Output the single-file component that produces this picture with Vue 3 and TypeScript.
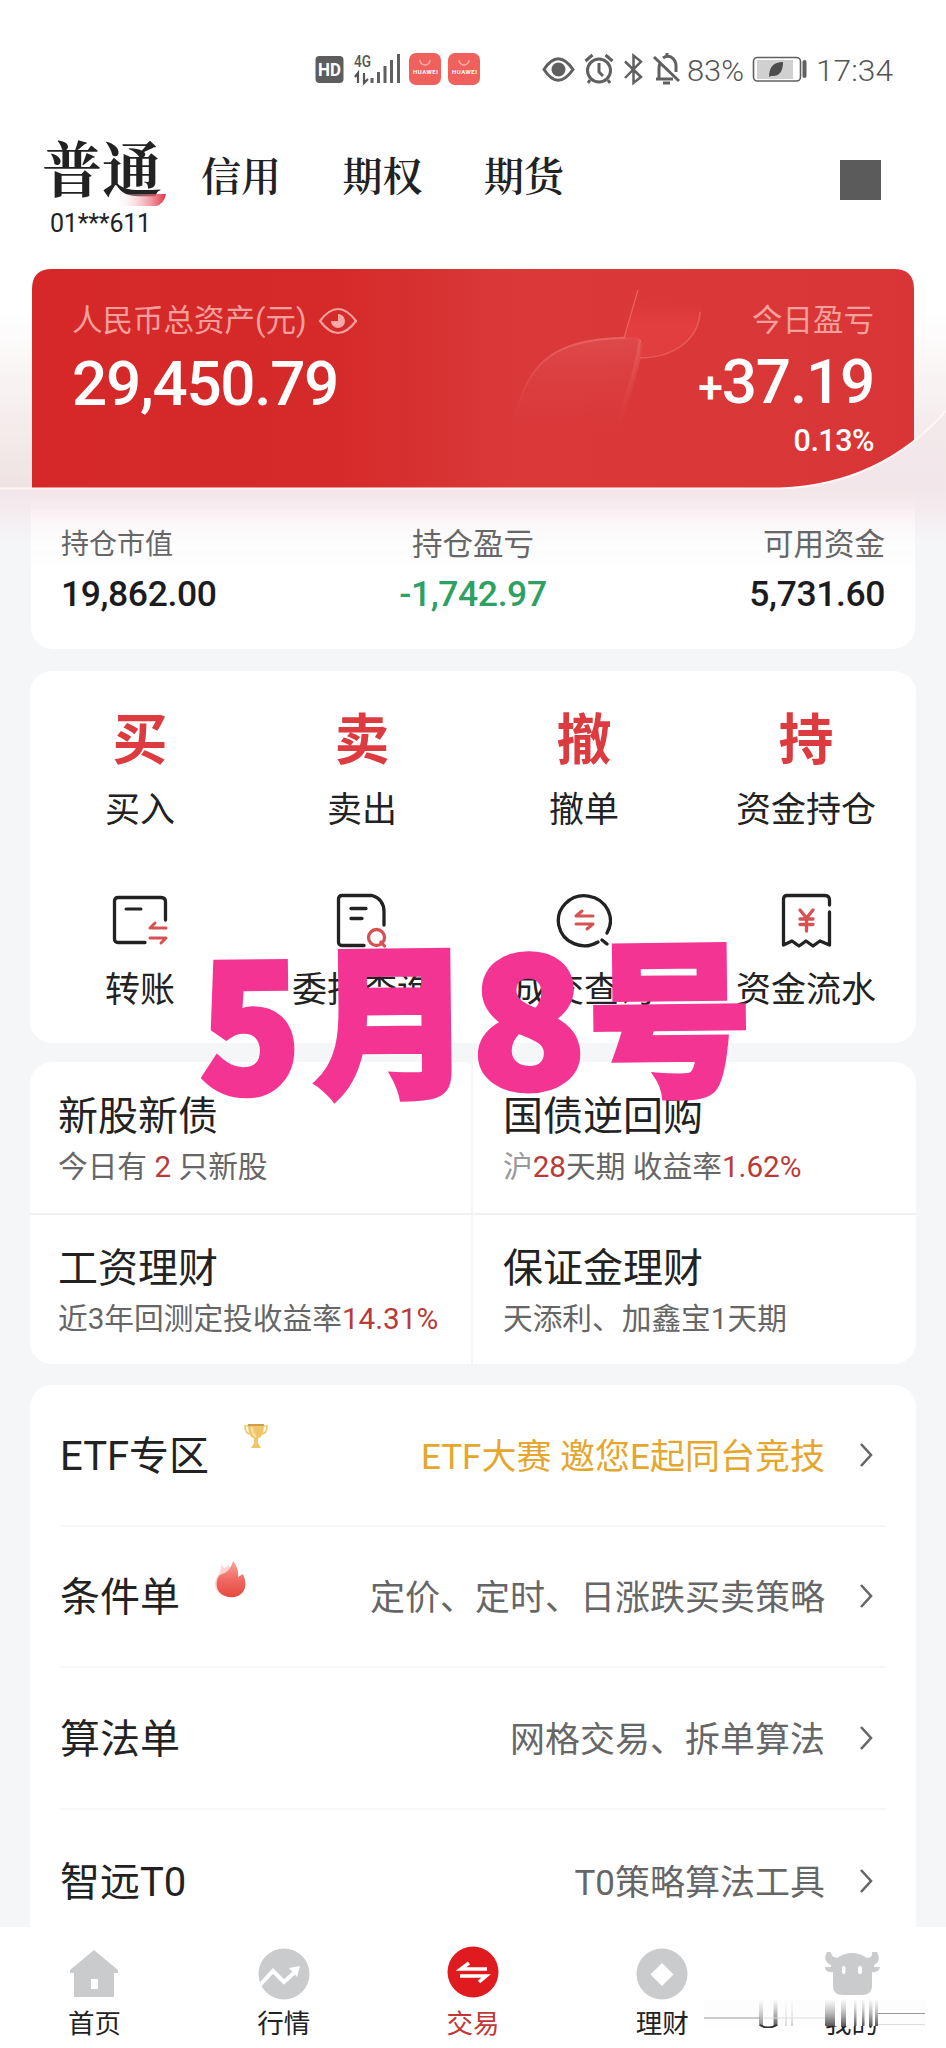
<script setup lang="ts">
interface Row { title: string; note: string; gold?: boolean; badge?: 'cup' | 'fire' }

const tabs: string[] = ['信用', '期权', '期货']
const quick = [
  { glyph: '买', label: '买入' },
  { glyph: '卖', label: '卖出' },
  { glyph: '撤', label: '撤单' },
  { glyph: '持', label: '资金持仓' },
]
const tools = [
  { icon: 'transfer', label: '转账' },
  { icon: 'orders', label: '委托查询' },
  { icon: 'deals', label: '成交查询' },
  { icon: 'flow', label: '资金流水' },
]
const rows: Row[] = [
  { title: 'ETF专区', note: 'ETF大赛 邀您E起同台竞技', gold: true, badge: 'cup' },
  { title: '条件单', note: '定价、定时、日涨跌买卖策略', badge: 'fire' },
  { title: '算法单', note: '网格交易、拆单算法' },
  { title: '智远T0', note: 'T0策略算法工具' },
]
const nav = [
  { icon: 'home', label: '首页' },
  { icon: 'market', label: '行情' },
  { icon: 'trade', label: '交易' },
  { icon: 'wealth', label: '理财' },
  { icon: 'mine', label: '我的' },
]
</script>

<template>
  <div class="screen">
    <header class="status">
      <svg class="status-left" viewBox="315 50 170 38">
        <rect x="315.500" y="56" width="28" height="27" rx="4" fill="#5d5d5d" />
        <text x="318" y="76" font-size="18" font-weight="700" fill="#fff" textLength="23" lengthAdjust="spacingAndGlyphs">HD</text>
        <text x="354" y="67" font-size="16" font-weight="500" fill="#555" textLength="17" lengthAdjust="spacingAndGlyphs">4G</text>
        <path d="M355 77l3-4v10M364 73v10l4-4" fill="none" stroke="#555" stroke-width="2.200" />
        <path d="M372 83v-5M378.500 83V72M385 83V66M391.500 83V60M398.500 83V54" stroke="#606060" stroke-width="3" />
        <g v-for="x in [409, 448]" :key="x">
          <rect :x="x" y="53" width="32" height="32" rx="7" fill="#f0605d" />
          <path :d="`M${x + 11} 60a5 5 0 0 0 10 0`" fill="none" stroke="#ffb5a4" stroke-width="1.500" />
          <text :x="x + 4" y="74" font-size="6" font-weight="700" fill="#fff" textLength="25">HUAWEI</text>
        </g>
      </svg>
      <svg class="status-right" viewBox="540 50 356 38">
        <g fill="none" stroke="#606060" stroke-width="3">
          <path d="M544 69.500Q558 48 573 69.500Q558 91 544 69.500Z" />
          <circle cx="558.500" cy="69.500" r="5.500" fill="#606060" />
          <circle cx="599" cy="70.500" r="11.500" />
          <path d="M599 63v9l4 4M585.500 61l7-6M605.500 55l7 6M590 80l-2 3M608 80l2 3" />
          <path d="M625 61.500L641 77l-7.500 6V55.500l7.500 6L625 78" stroke-width="2.500" />
          <path d="M654 57l25 24M659 78V68q0-4 2-6M656 79h17M663 58q4-3 8-1 5 3 5 9v6M667 53v3M663 83h7" />
        </g>
        <text x="687" y="81" font-size="30" font-weight="300" fill="#555" textLength="57" lengthAdjust="spacingAndGlyphs">83%</text>
        <rect x="753.500" y="57.500" width="47" height="23.500" rx="4" fill="#fff" stroke="#606060" stroke-width="1.600" />
        <rect x="757" y="60" width="36" height="19" fill="#d0d0d0" />
        <path d="M769 77Q769 62 783 62Q783 77 771 76Z" fill="#4d4d4d" />
        <path d="M804.500 62v14" stroke="#606060" stroke-width="4" stroke-linecap="round" />
        <text x="816" y="81" font-size="30" font-weight="300" fill="#555" textLength="77" lengthAdjust="spacingAndGlyphs">17:34</text>
      </svg>
    </header>

    <nav class="tabs">
      <div class="tab-active">
        <strong>普通</strong>
        <svg class="swash" viewBox="0 0 52 12"><defs><linearGradient id="sw"><stop offset="0" stop-color="#fff" stop-opacity="0" /><stop offset="1" stop-color="#e03445" /></linearGradient></defs><path d="M0 0H52Q50 10 42 12H0Z" fill="url(#sw)" /></svg>
        <span>01***611</span>
      </div>
      <div class="tab-list"><span v-for="t in tabs" :key="t">{{ t }}</span></div>
      <i class="square"></i>
    </nav>

    <section class="hero">
      <svg class="hero-bg" viewBox="0 249 946 301">
        <defs>
          <linearGradient id="side" x1="0" y1="0" x2="0" y2="1"><stop offset="0" stop-color="#fff" /><stop offset=".25" stop-color="#fff" /><stop offset="1" stop-color="#efe2e2" /></linearGradient>
          <linearGradient id="under" x1="0" y1="410" x2="0" y2="550" gradientUnits="userSpaceOnUse"><stop offset="0" stop-color="#f3e8ea" /><stop offset=".55" stop-color="#f2e6ea" /><stop offset="1" stop-color="#f6f7f9" /></linearGradient>
          <linearGradient id="red"><stop offset="0" stop-color="#d62828" /><stop offset=".35" stop-color="#d52a2a" /><stop offset=".55" stop-color="#da393a" /><stop offset="1" stop-color="#d93536" /></linearGradient>
          <linearGradient id="leafA" x1="0" y1="0" x2="0" y2="1"><stop offset="0" stop-color="#e05353" /><stop offset="1" stop-color="#d93637" stop-opacity="0" /></linearGradient>
          <linearGradient id="leafB" x1="0" y1="0" x2="0" y2="1"><stop offset="0" stop-color="#d93637" stop-opacity="0" /><stop offset=".5" stop-color="#e64042" /><stop offset="1" stop-color="#e23f41" /></linearGradient>
          <linearGradient id="lineA" x1="0" y1="0" x2="0" y2="1"><stop offset="0" stop-color="#ea6462" /><stop offset="1" stop-color="#d93637" stop-opacity="0" /></linearGradient>
          <linearGradient id="panel" x1="0" y1="488" x2="0" y2="550" gradientUnits="userSpaceOnUse"><stop offset="0" stop-color="#f3e4e8" /><stop offset=".55" stop-color="#faf4f6" /><stop offset="1" stop-color="#fafbfd" /></linearGradient>
        </defs>
        <rect y="249" width="946" height="240" fill="url(#side)" />
        <path d="M32 488V289Q32 269 52 269H894Q914 269 914 289V488Z" fill="url(#red)" />
        <path d="M511 438C522 365 550 340 620 338Q640 336 641 342C637 370 625 405 611 446Z" fill="url(#leafA)" opacity=".65" />
        <path d="M511 438C522 365 550 340 620 338Q640 336 641 342" fill="none" stroke="url(#lineA)" stroke-width="2" />
        <path d="M641 342C637 370 625 405 611 446" fill="none" stroke="url(#lineA)" stroke-width="5" opacity=".7" />
        <path d="M638 290L624 338L641 340L640 358C680 357 705 335 703 290Z" fill="url(#leafB)" opacity=".8" />
        <path d="M638 290L624 338" stroke="#eb6260" stroke-width="1.200" />
        <path d="M640 358C680 357 699 335 700 312" fill="none" stroke="#e85b58" stroke-width="1.600" />
        <path d="M0 488.500H780Q880 485 946 411V550H0Z" fill="url(#under)" />
        <path d="M31 490H915V550H31Z" fill="url(#panel)" />
        <path d="M0 488.500H780Q880 485 946 411" fill="none" stroke="#fff5f5" stroke-width="2" />
      </svg>
      <div class="hero-text">
        <div class="total">
          <div class="cap">人民币总资产(元)
            <svg viewBox="0 0 40 28"><path d="M2 14Q20-10 38 14Q20 38 2 14Z" fill="none" stroke="#f5a09c" stroke-width="2.200" /><path d="M20 14V7A7 7 0 1 1 13 14Z" fill="#f7aaa5" /></svg>
          </div>
          <b>29,450.79</b>
        </div>
        <div class="today">
          <div class="cap">今日盈亏</div>
          <b><small>+</small>37.19</b>
          <em>0.13%</em>
        </div>
      </div>
    </section>

    <section class="holdings">
      <div><span class="narrow">持仓市值</span><b>19,862.00</b></div>
      <div class="mid"><span>持仓盈亏</span><b class="green">-1,742.97</b></div>
      <div class="end"><span>可用资金</span><b>5,731.60</b></div>
    </section>

    <section class="card grid4">
      <div v-for="q in quick" :key="q.glyph" class="cell"><b>{{ q.glyph }}</b><span>{{ q.label }}</span></div>
      <div v-for="t in tools" :key="t.icon" class="cell tool">
        <svg viewBox="0 0 56 56" fill="none" stroke="#222" stroke-width="3.300" stroke-linecap="round" stroke-linejoin="round">
          <template v-if="t.icon === 'transfer'">
            <path d="M33 50.500H6Q2.500 50.500 2.500 47V9Q2.500 5.500 6 5.500H49Q53.500 5.500 53.500 10V28" /><path d="M14 17H29" stroke-width="3" />
            <path d="M54 36H38L43 31M38 46H54L49 51" stroke="#d65252" stroke-width="3" />
          </template>
          <template v-else-if="t.icon === 'orders'">
            <path d="M30 53.500H8Q4.500 53.500 4.500 50V7Q4.500 3.500 8 3.500H38Q50 7 50 20V33" /><path d="M17 16.500H32M17 26.500H28" />
            <circle cx="42.500" cy="45.500" r="8" stroke="#d65252" /><path d="M47 50l3.500 4" stroke="#d65252" />
          </template>
          <template v-else-if="t.icon === 'deals'">
            <path d="M51 41A26 25 0 1 0 42 50M46 48L51 52" /><path d="M37 24H20L26 19M20 32H37L31 37" stroke="#d65252" stroke-width="3" />
          </template>
          <template v-else>
            <path d="M51.500 13V8Q51.500 3.500 47 3.500H9Q5.500 3.500 5.500 7V53L14 49L21 54L28 49L35 54L42 49L51.500 53V20" />
            <path d="M22 18L28.500 26L35 18M28.500 26V39M22 27H35M22 32.500H35" stroke="#d65252" />
          </template>
        </svg>
        <span>{{ t.label }}</span>
      </div>
    </section>

    <section class="card promo">
      <div><h3>新股新债</h3><p>今日有 <i>2</i> 只新股</p></div>
      <div><h3>国债逆回购</h3><p><s>沪</s><i>28</i>天期 收益率<i>1.62%</i></p></div>
      <div><h3>工资理财</h3><p>近3年回测定投收益率<i>14.31%</i></p></div>
      <div><h3>保证金理财</h3><p>天添利、加鑫宝1天期</p></div>
    </section>

    <section class="card list">
      <div v-for="r in rows" :key="r.title" class="row">
        <h3>{{ r.title }}</h3>
        <svg v-if="r.badge === 'cup'" class="cup" viewBox="0 0 24 26"><path d="M5 3H1Q1 11 7 11M19 3H23Q23 11 17 11" fill="none" stroke="#f0c766" stroke-width="1.500" /><path d="M4 1H20Q20 14 14 15.500L14 20L17 25H7L10 20V15.500Q4 14 4 1Z" fill="#f2c468" /><path d="M4 1H20V3H4Z" fill="#cf9d4c" /><path d="M8 4Q8 11 12 14" fill="none" stroke="#fbe2a1" stroke-width="2.500" /></svg>
        <svg v-if="r.badge === 'fire'" class="fire" viewBox="0 0 34 38"><path d="M7 12Q-2 25 5 32Q12 39 22 36L16 5Q9 12 9 2Z" fill="#fbd3cd" /><path d="M20 1Q26 8 25 17L30 14Q35 25 30 32Q23 40 12 36Q2 32 4 21Q5 14 12 13Q18 9 20 1Z" fill="url(#fireFill)" /><defs><linearGradient id="fireFill" x1="0" y1="0" x2="0" y2="1"><stop offset="0" stop-color="#f9a49c" /><stop offset=".5" stop-color="#f06b63" /><stop offset="1" stop-color="#e64840" /></linearGradient></defs></svg>
        <p :class="{ gold: r.gold }">{{ r.note }}</p>
        <svg class="chev" viewBox="0 0 14 26"><path d="M2 2L12 13L2 24" fill="none" stroke="#666" stroke-width="2.600" /></svg>
      </div>
    </section>

    <footer class="bottom">
      <div v-for="n in nav" :key="n.icon" :class="['item', { on: n.icon === 'trade' }]">
        <svg viewBox="0 0 56 52" fill="#c9cbcd">
          <path v-if="n.icon === 'home'" d="M28 2L52 22V25H48V49H8V25H4V22ZM25 31V41H32V31Z" fill-rule="evenodd" />
          <template v-if="n.icon === 'market'"><circle cx="28" cy="26" r="25.500" /><path d="M4 37L17 23L28 34L40 23" fill="none" stroke="#fff" stroke-width="4" /><path d="M33 20L44 18L41 29Z" fill="#fff" /></template>
          <template v-if="n.icon === 'trade'"><circle cx="28" cy="24" r="25.500" fill="#e01b1f" /><path d="M42 21H16L24 15M15 28H41L34 34" fill="none" stroke="#fff" stroke-width="3.600" /></template>
          <template v-if="n.icon === 'wealth'"><circle cx="28" cy="26" r="25.500" /><path d="M28 15L39.500 26.500L28 38L16.500 26.500Z" fill="#fff" /></template>
          <template v-if="n.icon === 'mine'">
            <path d="M13 10Q28 0 43 10L47 9Q49 6 48 4H53Q58 13 50 17V19H56Q55 25 48 24V39Q47 47 38 47H19Q9 47 9 38V24Q1 25 1 19H7V17Q-2 13 3 4H7Q7 9 13 10Z" />
            <rect x="18" y="18" width="3.500" height="8" rx="1.700" fill="#fff" /><rect x="34" y="18" width="4" height="8" rx="1.700" fill="#fff" />
          </template>
        </svg>
        <span>{{ n.label }}</span>
      </div>
    </footer>

    <!-- smeared strip lying over the last tab label -->
    <svg class="smear" viewBox="704 1998 222 30">
      <defs><linearGradient id="fade" x1="0" y1="2000" x2="0" y2="2026" gradientUnits="userSpaceOnUse"><stop offset="0" stop-color="#999" stop-opacity=".05" /><stop offset="1" stop-color="#444" stop-opacity=".9" /></linearGradient></defs>
      <rect x="704" y="2000" width="222" height="26" fill="#fdfdfd" />
      <g fill="url(#fade)">
        <rect x="759" y="2000" width="4" height="26" opacity=".7" /><rect x="773.500" y="2000" width="4" height="26" />
        <rect x="785" y="2000" width="2" height="26" opacity=".2" /><rect x="791" y="2000" width="2" height="26" opacity=".25" />
        <rect x="825" y="2000" width="10" height="26" /><rect x="841" y="2000" width="5" height="26" /><rect x="854" y="2000" width="2.500" height="26" />
        <rect x="862" y="2000" width="2.500" height="26" /><rect x="869" y="2000" width="3.500" height="26" /><rect x="875" y="2000" width="3" height="26" />
      </g>
      <path d="M760 2025Q768 2030 777 2025" fill="none" stroke="#333" stroke-width="2" />
      <path d="M704 2018H760M878 2013.500H925" stroke="#999" stroke-width="1.200" /><path d="M763 2018H825M878 2024.500H925" stroke="#ddd" stroke-width="1" />
    </svg>

    <svg class="stamp" viewBox="190 930 570 190">
      <g fill="#f43492" stroke="#f43492" stroke-width="5" font-weight="900" transform="rotate(-0.6 473 1020)">
        <text x="199" y="1091" font-size="181" textLength="102" lengthAdjust="spacingAndGlyphs">5</text>
        <text x="313" y="1083" font-size="164" textLength="159" lengthAdjust="spacingAndGlyphs">月</text>
        <text x="471" y="1089" font-size="182" textLength="115" lengthAdjust="spacingAndGlyphs">8</text>
        <text x="588" y="1085" font-size="167" textLength="164" lengthAdjust="spacingAndGlyphs">号</text>
      </g>
    </svg>
  </div>
</template>

<style>
html, body { margin: 0; background: #fff; }
</style>

<style scoped>
.screen { position: relative; width: 946px; height: 2048px; overflow: hidden; display: flex; flex-direction: column; background: #f5f6f8; color: #222; font-family: Roboto, "Noto Sans CJK SC", sans-serif; }
.screen * { box-sizing: border-box; }
h3, p { margin: 0; font-weight: 400; }
i, em, s { font-style: normal; text-decoration: none; }
svg { flex: none; display: block; }
.status { height: 105px; padding: 50px 50px 0 315px; display: flex; justify-content: space-between; background: #fff; flex: none; }
.status-left { width: 170px; height: 38px; }
.status-right { width: 356px; height: 38px; }
.tabs { height: 144px; background: #fff; display: flex; padding-left: 43px; flex: none; }
.tab-active { width: 158px; padding-top: 28px; display: flex; flex-direction: column; }
.tab-active strong { font: 700 60px/66px "Noto Serif CJK SC", "Noto Serif SC", "Noto Sans CJK SC", serif; margin-left: -1px; }
.swash { width: 52px; height: 12px; margin: -5px 0 0 71px; }
.tab-active span { font-size: 25px; line-height: 26px; margin: 5px 0 0 7px; letter-spacing: -.2px; }
.tab-list { display: flex; padding-top: 41px; }
.tab-list span { width: 141.500px; font: 600 40px/56px "Noto Serif CJK SC", "Noto Serif SC", "Noto Sans CJK SC", serif; }
.square { width: 41px; height: 40px; margin: 55px 0 0 214px; background: #5b5b5b; }
.hero { height: 239px; position: relative; flex: none; }
.hero-bg { position: absolute; top: 0; left: 0; width: 946px; height: 301px; }
.hero-text { position: relative; display: flex; justify-content: space-between; padding: 50px 72px 0 72px; }
.cap { font-size: 30.500px; line-height: 44px; color: #f5a09c; display: flex; align-items: center; gap: 11px; }
.cap svg { width: 40px; height: 28px; }
.total b, .today b { display: block; font-weight: 500; font-size: 62px; line-height: 74px; letter-spacing: -1.300px; color: #fff; margin-top: 4px; }
.today { display: flex; flex-direction: column; align-items: flex-end; }
.today b { height: 74px; margin-top: 2px; font-size: 62px; letter-spacing: -1.200px; }
.today small { font-size: 45px; }
.today em { font-size: 30.500px; line-height: 36px; letter-spacing: -.5px; font-weight: 500; color: #fff; margin-top: 4px; }
.holdings { position: relative; height: 161px; margin: 0 31px; padding: 36px 30px 0; flex: none; display: grid; grid-template-columns: 1fr 1fr 1fr; background: linear-gradient(transparent 0, transparent 20px, #fff 80px); border-radius: 0 0 22px 22px; }
.holdings div { display: flex; flex-direction: column; }
.holdings span { font-size: 30.500px; line-height: 42px; color: #666; }
.holdings .narrow { font-size: 28px; }
.holdings b { font-weight: 500; font-size: 35.500px; letter-spacing: -.4px; line-height: 46px; margin-top: 5px; color: #1c1c1e; }
.holdings .mid { align-items: center; }
.holdings .end { align-items: flex-end; }
.holdings .green { color: #2da063; }
.card { margin: 0 30px; background: #fff; border-radius: 22px; flex: none; }
.grid4 { margin-top: 22px; height: 372px; display: grid; grid-template-columns: repeat(4, 222px); grid-template-rows: 183px 189px; justify-content: center; }
.cell { display: flex; flex-direction: column; align-items: center; padding-top: 33px; }
.cell b { font-size: 55px; line-height: 72px; font-weight: 700; color: #dc3c40; }
.cell span { font-size: 35px; line-height: 48px; margin-top: 11px; white-space: nowrap; }
.tool { padding-top: 38px; }
.tool svg { width: 56px; height: 56px; }
.tool span { margin-top: 19px; }
.promo { margin-top: 19px; height: 302px; display: grid; grid-template-columns: 443px 443px; grid-template-rows: 153px 149px; overflow: hidden; }
.promo div { padding: 29px 0 0 28px; border-right: 2px solid #f5f5f6; border-bottom: 2px solid #f1f1f2; white-space: nowrap; }
.promo div:nth-child(even) { padding-left: 30px; border-right: 0; }
.promo div:nth-child(n + 3) { border-bottom: 0; padding-top: 28px; }
.promo h3 { font-size: 40px; line-height: 52px; }
.promo p { font-size: 29.700px; line-height: 42px; margin-top: 3px; color: #666; }
.promo i { color: #b83a39; }
.promo s { color: #999; }
.list { margin-top: 21px; height: 542px; border-radius: 22px 22px 0 0; overflow: hidden; padding: 0 30px; }
.row { height: 141.600px; border-bottom: 2px solid #f7f7f8; display: flex; align-items: center; }
.row:last-child { border-bottom: 0; }
.row h3 { font-size: 40px; line-height: 52px; padding-top: 4px; }
.row p { font-size: 35px; line-height: 48px; margin-left: auto; padding-top: 6px; color: #666; }
.row p.gold { color: #e5a62e; }
.cup { width: 24px; height: 26px; margin: -38px 0 0 35px; }
.fire { width: 34px; height: 38px; margin: -34px 0 0 33px; }
.chev { width: 14px; height: 26px; margin: 0 13px 0 34px; }
.bottom { height: 121px; background: #fff; display: grid; grid-template-columns: repeat(5, 189.300px); justify-content: center; flex: none; }
.item { display: flex; flex-direction: column; align-items: center; padding-top: 21px; }
.item svg { width: 56px; height: 52px; overflow: visible; }
.item span { font-size: 26.500px; line-height: 36px; margin-top: 6px; }
.on span { color: #c13736; }
.smear { position: absolute; left: 704px; top: 1998px; width: 222px; height: 30px; }
.stamp { position: absolute; left: 190px; top: 930px; width: 570px; height: 190px; font-family: "Noto Sans CJK SC", sans-serif; overflow: visible; }
</style>
